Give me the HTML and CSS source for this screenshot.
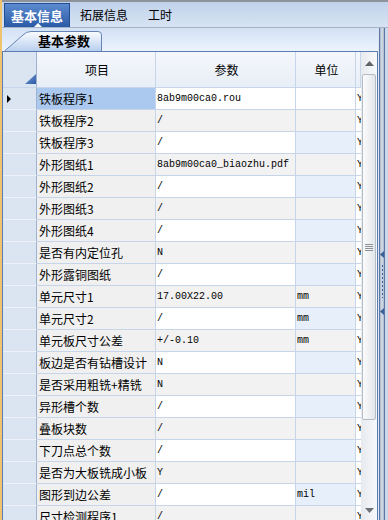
FILE: index.html
```html
<!DOCTYPE html>
<html lang="zh-CN">
<head>
    <meta charset="UTF-8">
    <title>基本信息</title>
    <link rel="stylesheet" href="styles.css">
</head>
<body>
<div class="window">
    <!-- top tabs -->
    <div class="tabbar">
        <div class="tab active">基本信息</div>
        <div class="tab">拓展信息</div>
        <div class="tab">工时</div>
    </div>

    <div class="main">
        <div class="content">
            <div class="subtabs">
                <div class="subtab">
                    <svg width="100" height="20" viewBox="0 0 100 20">
                        <defs>
                            <linearGradient id="tabfill" x1="0" y1="0" x2="0" y2="1">
                                <stop offset="0" stop-color="#fbfdff"/>
                                <stop offset="1" stop-color="#b9cfee"/>
                            </linearGradient>
                        </defs>
                        <path d="M0.5 20 L19 4 Q22.5 0.5 27 0.5 L94 0.5 Q97.5 0.5 97.5 4 L97.5 20" fill="url(#tabfill)" stroke="#6684b4"/>
                    </svg>
                    <span class="subtab-label">基本参数</span>
                </div>
            </div>

            <div class="grid">
                <div class="sheet">
                    <div class="row head">
                        <div class="cell rowhead corner">
                            <svg width="11" height="10" viewBox="0 0 11 10">
                                <defs>
                                    <linearGradient id="cornerfill" x1="0" y1="0" x2="1" y2="1">
                                        <stop offset="0" stop-color="#7aa2dc"/>
                                        <stop offset="1" stop-color="#2b58a4"/>
                                    </linearGradient>
                                </defs>
                                <polygon points="11,0 11,10 0,10" fill="url(#cornerfill)"/>
                            </svg>
                        </div>
                        <div class="cell">项目</div>
                        <div class="cell">参数</div>
                        <div class="cell">单位</div>
                        <div class="cell"></div>
                    </div>

                    <div class="row odd current">
                        <div class="cell rowhead">
                            <svg width="4" height="8" viewBox="0 0 4 8"><polygon points="0,0 4,4 0,8" fill="#000"/></svg>
                        </div>
                        <div class="cell name">铁板程序1</div>
                        <div class="cell val mono">8ab9m00ca0.rou</div>
                        <div class="cell unit mono"></div>
                        <div class="cell extra mono">Y</div>
                    </div>
                    <div class="row even">
                        <div class="cell rowhead"></div>
                        <div class="cell name">铁板程序2</div>
                        <div class="cell val mono">/</div>
                        <div class="cell unit mono"></div>
                        <div class="cell extra mono">Y</div>
                    </div>
                    <div class="row odd">
                        <div class="cell rowhead"></div>
                        <div class="cell name">铁板程序3</div>
                        <div class="cell val mono">/</div>
                        <div class="cell unit mono"></div>
                        <div class="cell extra mono">Y</div>
                    </div>
                    <div class="row even">
                        <div class="cell rowhead"></div>
                        <div class="cell name">外形图纸1</div>
                        <div class="cell val mono">8ab9m00ca0_biaozhu.pdf</div>
                        <div class="cell unit mono"></div>
                        <div class="cell extra mono">Y</div>
                    </div>
                    <div class="row odd">
                        <div class="cell rowhead"></div>
                        <div class="cell name">外形图纸2</div>
                        <div class="cell val mono">/</div>
                        <div class="cell unit mono"></div>
                        <div class="cell extra mono">Y</div>
                    </div>
                    <div class="row even">
                        <div class="cell rowhead"></div>
                        <div class="cell name">外形图纸3</div>
                        <div class="cell val mono">/</div>
                        <div class="cell unit mono"></div>
                        <div class="cell extra mono">Y</div>
                    </div>
                    <div class="row odd">
                        <div class="cell rowhead"></div>
                        <div class="cell name">外形图纸4</div>
                        <div class="cell val mono">/</div>
                        <div class="cell unit mono"></div>
                        <div class="cell extra mono">Y</div>
                    </div>
                    <div class="row even">
                        <div class="cell rowhead"></div>
                        <div class="cell name">是否有内定位孔</div>
                        <div class="cell val mono">N</div>
                        <div class="cell unit mono"></div>
                        <div class="cell extra mono">Y</div>
                    </div>
                    <div class="row odd">
                        <div class="cell rowhead"></div>
                        <div class="cell name">外形露铜图纸</div>
                        <div class="cell val mono">/</div>
                        <div class="cell unit mono"></div>
                        <div class="cell extra mono">Y</div>
                    </div>
                    <div class="row even">
                        <div class="cell rowhead"></div>
                        <div class="cell name">单元尺寸1</div>
                        <div class="cell val mono">17.00X22.00</div>
                        <div class="cell unit mono">mm</div>
                        <div class="cell extra mono">Y</div>
                    </div>
                    <div class="row odd">
                        <div class="cell rowhead"></div>
                        <div class="cell name">单元尺寸2</div>
                        <div class="cell val mono">/</div>
                        <div class="cell unit mono">mm</div>
                        <div class="cell extra mono">Y</div>
                    </div>
                    <div class="row even">
                        <div class="cell rowhead"></div>
                        <div class="cell name">单元板尺寸公差</div>
                        <div class="cell val mono">+/-0.10</div>
                        <div class="cell unit mono">mm</div>
                        <div class="cell extra mono">Y</div>
                    </div>
                    <div class="row odd">
                        <div class="cell rowhead"></div>
                        <div class="cell name">板边是否有钻槽设计</div>
                        <div class="cell val mono">N</div>
                        <div class="cell unit mono"></div>
                        <div class="cell extra mono">Y</div>
                    </div>
                    <div class="row even">
                        <div class="cell rowhead"></div>
                        <div class="cell name">是否采用粗铣+精铣</div>
                        <div class="cell val mono">N</div>
                        <div class="cell unit mono"></div>
                        <div class="cell extra mono">Y</div>
                    </div>
                    <div class="row odd">
                        <div class="cell rowhead"></div>
                        <div class="cell name">异形槽个数</div>
                        <div class="cell val mono">/</div>
                        <div class="cell unit mono"></div>
                        <div class="cell extra mono">Y</div>
                    </div>
                    <div class="row even">
                        <div class="cell rowhead"></div>
                        <div class="cell name">叠板块数</div>
                        <div class="cell val mono">/</div>
                        <div class="cell unit mono"></div>
                        <div class="cell extra mono">Y</div>
                    </div>
                    <div class="row odd">
                        <div class="cell rowhead"></div>
                        <div class="cell name">下刀点总个数</div>
                        <div class="cell val mono">/</div>
                        <div class="cell unit mono"></div>
                        <div class="cell extra mono">Y</div>
                    </div>
                    <div class="row even">
                        <div class="cell rowhead"></div>
                        <div class="cell name">是否为大板铣成小板</div>
                        <div class="cell val mono">Y</div>
                        <div class="cell unit mono"></div>
                        <div class="cell extra mono">Y</div>
                    </div>
                    <div class="row odd">
                        <div class="cell rowhead"></div>
                        <div class="cell name">图形到边公差</div>
                        <div class="cell val mono">/</div>
                        <div class="cell unit mono">mil</div>
                        <div class="cell extra mono">Y</div>
                    </div>
                    <div class="row even">
                        <div class="cell rowhead"></div>
                        <div class="cell name">尺寸检测程序1</div>
                        <div class="cell val mono">/</div>
                        <div class="cell unit mono"></div>
                        <div class="cell extra mono">Y</div>
                    </div>
                </div>

                <!-- vertical scrollbar -->
                <div class="vscroll">
                    <div class="sb-btn">
                        <svg width="9" height="5" viewBox="0 0 9 5"><polygon points="4.5,0 9,5 0,5" fill="#5f646b"/></svg>
                    </div>
                    <div class="sb-thumb">
                        <div class="grip"></div>
                    </div>
                    <div class="sb-track"></div>
                    <div class="sb-btn">
                        <svg width="9" height="5" viewBox="0 0 9 5"><polygon points="0,0 9,0 4.5,5" fill="#6d7279"/></svg>
                    </div>
                </div>
            </div>
        </div>

        <!-- splitter on the right -->
        <div class="splitter">
            <div class="sp-edge"></div>
            <div class="sp-bar">
                <svg width="4" height="7" viewBox="0 0 4 7"><polygon points="4,0 4,7 0,3.5" fill="#3b5f98"/></svg>
                <div class="sp-dots"></div>
                <svg width="4" height="7" viewBox="0 0 4 7"><polygon points="4,0 4,7 0,3.5" fill="#3b5f98"/></svg>
            </div>
            <div class="sp-side"></div>
        </div>
    </div>
</div>
</body>
</html>
```

FILE: styles.css
```css
* {
    box-sizing: border-box;
}
body {
    margin: 0;
    width: 388px;
    height: 520px;
    overflow: hidden;
    font-family: "Noto Sans CJK SC", sans-serif;
    font-size: 12px;
    color: #000;
    background: #dfe8f5;
}
.window {
    height: 520px;
    border-left: 2px solid #f0c36e;
    display: flex;
    flex-direction: column;
}

/* top tabs */
.tabbar {
    height: 28px;
    flex: none;
    display: flex;
    padding: 1px 0 0 2px;
    border-top: 2px solid #8e939b;
    border-bottom: 1px solid #a4b3c8;
    background: linear-gradient(#c0d2eb, #d7e3f3);
}
.tab {
    height: 24px;
    line-height: 24px;
    padding: 0 10px;
    font-size: 12px;
}
.tab.active {
    position: relative;
    width: 66px;
    padding: 0;
    text-align: center;
    color: #fff;
    font-weight: bold;
    font-size: 13px;
    background: linear-gradient(#5d8bcf, #2a5aa6);
    border: 1px solid #224d92;
    border-bottom: none;
}
.tab.active::after {
    content: "";
    position: absolute;
    left: 29px;
    bottom: 0;
    border-left: 4px solid transparent;
    border-right: 4px solid transparent;
    border-bottom: 4px solid #fff;
}

.main {
    flex: 1;
    min-height: 0;
    display: flex;
    overflow: hidden;
}
.content {
    flex: 1;
    display: flex;
    flex-direction: column;
}

/* second level tab */
.subtabs {
    height: 23px;
    flex: none;
    display: flex;
    align-items: flex-end;
    padding-left: 2px;
    background: linear-gradient(#d2e1f5, #ecf3fd);
}
.subtab {
    display: grid;
    height: 20px;
}
.subtab > * {
    grid-area: 1 / 1;
}
.subtab-label {
    padding-left: 34px;
    line-height: 20px;
    font-size: 13px;
    font-weight: bold;
}

/* property grid */
.grid {
    flex: none;
    height: 471px;
    display: flex;
    border: 1px solid #5b7db3;
    background: #fff;
}
.sheet {
    width: 358px;
    overflow: hidden;
}
.row {
    display: grid;
    grid-template-columns: 34px 119px 140px 60px 5px;
    height: 22px;
}
.cell {
    overflow: hidden;
    white-space: nowrap;
    line-height: 21px;
    padding-left: 2px;
    border-right: 1px solid #c6d5ea;
    border-bottom: 1px solid #c6d5ea;
}
.cell.rowhead {
    display: flex;
    align-items: center;
    padding-left: 4px;
    background: #dbe4f1;
    border-right-color: #9fb2cf;
    border-bottom-color: #eef2f8;
}
.row.head {
    height: 36px;
}
.row.head .cell {
    line-height: 35px;
    text-align: center;
    background: linear-gradient(#f4f7fb, #e8eef7);
}
.row.head .cell.corner {
    align-items: flex-end;
    justify-content: flex-end;
    padding: 0 0 3px 0;
    background: #dbe4f1;
    border-bottom-color: #c6d5ea;
}
.cell.name {
    background: #f0f0f0;
}
.row.current .cell.name {
    background: #abc9ef;
}
.mono {
    font-family: "Liberation Mono", monospace;
    font-size: 10px;
    padding-left: 1px;
}
.row.odd .val {
    background: #fff;
}
.row.odd .unit {
    background: #e7effa;
}
.row.even .val,
.row.even .unit {
    background: #f2f2f2;
}
.row.current .unit {
    background: #fff;
}
.cell.extra {
    padding-left: 1px;
    border-right: none;
}

/* scrollbar */
.vscroll {
    width: 16px;
    display: flex;
    flex-direction: column;
    background: linear-gradient(to right, #e7eaee, #f7f8fa);
}
.sb-btn {
    height: 22px;
    flex: none;
    display: flex;
    align-items: center;
    justify-content: center;
}
.sb-thumb {
    height: 346px;
    flex: none;
    margin: 0 1px;
    display: flex;
    align-items: center;
    justify-content: center;
    border: 1px solid #b4bcc6;
    border-radius: 2px;
    background: linear-gradient(to right, #fbfbfc, #e3e6ea);
}
.grip {
    width: 8px;
    height: 7px;
    background: repeating-linear-gradient(#8d939b 0 1px, transparent 1px 2px);
}
.sb-track {
    flex: 1;
}

/* splitter */
.splitter {
    width: 10px;
    flex: none;
    display: flex;
}
.sp-edge {
    width: 1px;
    background: #dbe5f3;
}
.sp-bar {
    width: 6px;
    display: flex;
    flex-direction: column;
    align-items: center;
    padding-top: 223px;
    border-left: 1px solid #5a76a4;
    border-right: 1px solid #5a76a4;
    background: linear-gradient(to right, #a9b5c6, #d6dfeb 50%, #a9b5c6);
}
.sp-dots {
    width: 1px;
    height: 33px;
    margin: 7px 0 10px;
    background: repeating-linear-gradient(#3b5f98 0 2px, transparent 2px 4px);
}
.sp-side {
    flex: 1;
    background: #cbd8ea;
}
```
